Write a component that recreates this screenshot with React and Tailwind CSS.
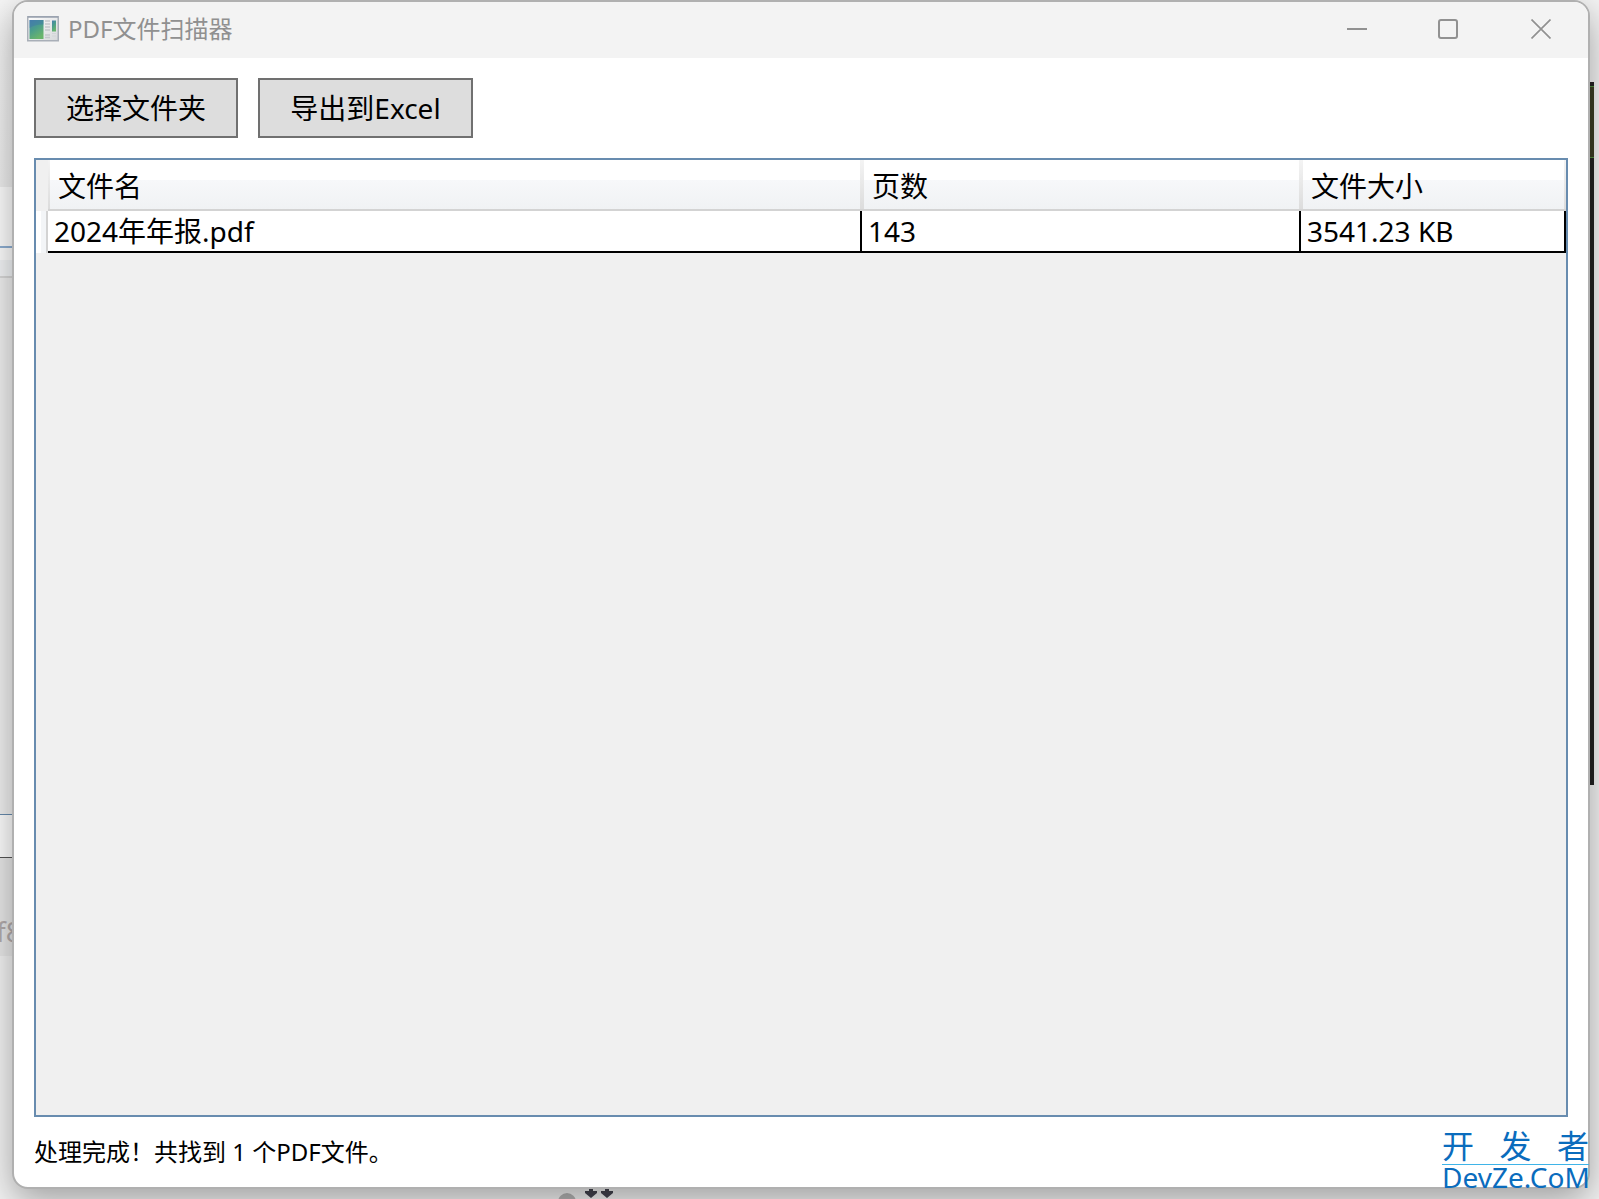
import React from "react";

const files = [{ name: "2024年年报.pdf", pages: 143, size: "3541.23 KB" }];

function AppIcon() {
  return (
    <svg width="32" height="26" viewBox="0 0 32 26" aria-hidden="true">
      <defs>
        <linearGradient id="screen" x1="0" y1="0" x2="0.5" y2="1">
          <stop offset="0" stopColor="#4a7fb0" />
          <stop offset="0.5" stopColor="#4a9d8c" />
          <stop offset="1" stopColor="#69b56c" />
        </linearGradient>
        <linearGradient id="frame" x1="0" y1="0" x2="1" y2="1">
          <stop offset="0" stopColor="#fdfdfd" />
          <stop offset="1" stopColor="#d6d8da" />
        </linearGradient>
      </defs>
      <rect x="0.75" y="0.75" width="30.5" height="24" fill="url(#frame)" stroke="#a9afb8" strokeWidth="1.5" />
      <path d="M1 1h30" stroke="#8d97a8" strokeWidth="1" />
      <rect x="2.5" y="4" width="14" height="19" fill="url(#screen)" />
      <path d="M2.5 12Q8 8 16.5 8.5V4H2.5Z" fill="#3f78a8" opacity="0.45" />
      <path d="M18 5h5M18 8h5M18 11h5M18 14h5M18 19h5M18 21.5h5" stroke="#c4c7cb" strokeWidth="1.3" />
      <rect x="25" y="4.5" width="4" height="11" fill="url(#screen)" />
      <path d="M25 17.5h4M25 20h4" stroke="#d2d4d7" />
    </svg>
  );
}

function Backdrop() {
  return (
    <div className="absolute inset-0 flex justify-between bg-[#f4f4f4]" aria-hidden="true">
      <div className="flex w-10 flex-col overflow-hidden">
        <div className="h-[187px] bg-linear-to-b from-[#f6f6f6] to-[#f0f0f0]" />
        <div className="h-[59px] bg-white" />
        <div className="h-[2px] bg-[#8fb0d4]" />
        <div className="h-[12px] bg-white" />
        <div className="h-[16px] bg-[#f5f7f9]" />
        <div className="h-[2px] bg-[#dadada]" />
        <div className="h-[536px] bg-[#f2f2f2]" />
        <div className="h-[1px] bg-[#688caf]" />
        <div className="h-[42px] bg-white" />
        <div className="h-[1px] bg-[#555555]" />
        <div className="flex h-[98px] items-center bg-[#eaeaea] pt-12 text-[28px] leading-none text-[#b5adad]">
          <span className="-ml-1">f8</span>
        </div>
        <div className="flex-1 bg-[#f4f4f4]" />
      </div>
      <svg width="60" height="12" className="mr-auto ml-[516px] self-end">
        <circle cx="11" cy="15" r="9" fill="#b5b5b5" />
        <g fill="#44444f">
          <path d="M33 1h4v3h4v2l-6 5l-6-5V4h4Z" />
          <path d="M49 1h4v3h4v2l-6 5l-6-5V4h4Z" />
        </g>
      </svg>
      <div className="flex w-[40px] flex-col pr-[5px]">
        <div className="mt-[82px] flex h-[703px] flex-col bg-[#222222]">
          <div className="mt-1 h-[72px] border-y border-[#4f8f3f] bg-[#3a3d24]" />
        </div>
      </div>
    </div>
  );
}

export default function App() {
  return (
    <div className="relative flex h-screen overflow-hidden pr-[9px] pb-[10px] pl-3 font-['Noto_Sans','Noto_Sans_CJK_SC',sans-serif] text-black">
      <Backdrop />
      <main className="relative flex min-w-0 flex-1 flex-col overflow-hidden rounded-2xl border-2 border-[#b0b0b0] bg-white shadow-[0_12px_36px_rgba(0,0,0,0.35)]">
        <header className="flex h-14 shrink-0 items-center bg-[#f3f3f3] pb-0.5 pl-[13px]">
          <AppIcon />
          <h1 className="ml-[9px] flex-1 text-2xl text-[#909090]">PDF文件扫描器</h1>
          <button aria-label="最小化" className="flex h-full w-[90px] items-center justify-center text-[#919191]">
            <svg width="20" height="20" fill="none" stroke="currentColor" strokeWidth="2"><path d="M0 10h20" /></svg>
          </button>
          <button aria-label="最大化" className="flex h-full w-[92px] items-center justify-center text-[#919191]">
            <svg width="20" height="20" fill="none" stroke="currentColor" strokeWidth="2"><rect x="1" y="1" width="18" height="18" rx="2" /></svg>
          </button>
          <button aria-label="关闭" className="flex h-full w-[94px] items-center justify-center text-[#919191]">
            <svg width="20" height="20" fill="none" stroke="currentColor" strokeWidth="1.7"><path d="M0.5 0.5l19 19M19.5 0.5l-19 19" /></svg>
          </button>
        </header>
        <div className="flex min-h-0 flex-1 flex-col px-5 pt-5">
          <div className="flex gap-5 text-[28px] leading-9">
            <button className="h-[60px] w-[204px] border-2 border-[#707070] bg-[#dddddd]">选择文件夹</button>
            <button className="h-[60px] w-[215px] border-2 border-[#707070] bg-[#dddddd]">导出到Excel</button>
          </div>
          <div className="mt-5 min-h-0 flex-1 border-2 border-[#688caf] bg-[#f0f0f0]">
            <table className="w-full table-fixed border-separate border-spacing-0 text-left text-[28px] leading-9">
              <colgroup>
                <col className="w-3" />
                <col />
                <col className="w-[439px]" />
                <col className="w-[265px]" />
              </colgroup>
              <thead>
                <tr className="h-[51px]">
                  <td className="p-0" />
                  {["文件名", "页数", "文件大小"].map((label) => (
                    <th
                      key={label}
                      className="border-b-2 border-[#d3d3d3] bg-[linear-gradient(#ffffff_40%,#f7f8fa_40%,#f0f2f4_100%)] p-0 font-normal"
                    >
                      <div className="flex h-[49px] items-center">
                        <span className="h-full w-[2px] bg-linear-to-b from-[#f4f4f4] to-[#dcdcdc]" />
                        <span className="flex-1 pt-0.5 pl-2">{label}</span>
                        <span className="h-full w-[2px] bg-linear-to-b from-[#f4f4f4] to-[#dcdcdc]" />
                      </div>
                    </th>
                  ))}
                </tr>
              </thead>
              <tbody>
                {files.map((file) => (
                  <tr key={file.name} className="h-[42px]">
                    <td className="border-r-2 border-[#d3d3d3] bg-[linear-gradient(to_right,#ffffff_50%,#f3f5f7_50%)] p-0" />
                    <td className="border-r-2 border-b-2 border-black bg-white py-0 pl-1.5">{file.name}</td>
                    <td className="border-r-2 border-b-2 border-black bg-white py-0 pl-1.5">{file.pages}</td>
                    <td className="border-r-2 border-b-2 border-black bg-white py-0 pl-1.5">{file.size}</td>
                  </tr>
                ))}
              </tbody>
            </table>
          </div>
          <p className="flex h-[70px] shrink-0 items-center text-2xl" role="status">处理完成！共找到 1 个PDF文件。</p>
        </div>
      </main>
      <div className="absolute right-[10px] bottom-[10px] w-[147px] text-[#0a6cbd]">
        <div className="flex justify-between border-b border-[#3fb4e8] pb-1 text-[32px] leading-7">
          <span>开</span>
          <span>发</span>
          <span>者</span>
        </div>
        <div className="text-[28px] leading-6 whitespace-nowrap">DevZe.CoM</div>
      </div>
    </div>
  );
}
